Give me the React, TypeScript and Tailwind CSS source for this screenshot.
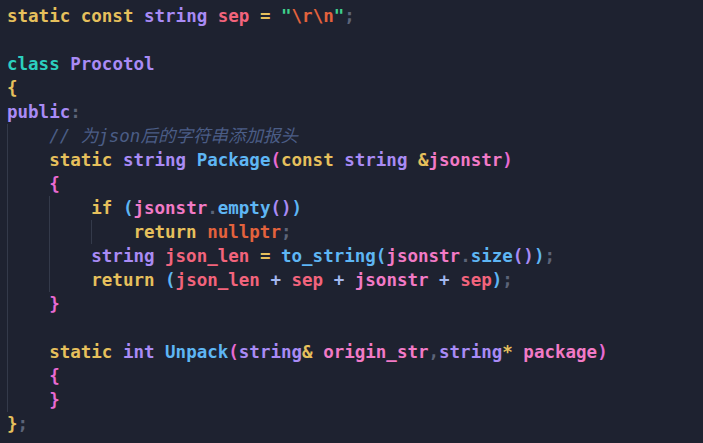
import React from 'react';

// token colours
const kw = 'text-[#e6c05c]';
const ty = 'text-[#a98bf5]';
const cls = 'text-[#2ccfbf]';
const red = 'text-[#f2647c]';
const pink = 'text-[#f27ac6]';
const fn = 'text-[#5eb6f4]';
const pun = 'text-[#5c6478]';
const str = 'text-[#3fd08d]';
const esc = 'text-[#e3623d]';
const op = 'text-[#e6c05c]';
const plus = 'text-[#a3b8ef]';
const cmt = 'text-[#4b5d86] italic font-normal';
const b1 = 'text-[#e6c05c]';
const b2 = 'text-[#e86ad2]';
const b3 = 'text-[#5eb6f4]';
const b4 = 'text-[#a98bf5]';

type Tok = [string, string];
type Line = { indent: number; guides: number; toks: Tok[] };

const lines: Line[] = [
  {
    indent: 0,
    guides: 0,
    toks: [
      ['static', kw], [' ', ''], ['const', kw], [' ', ''], ['string', ty], [' ', ''],
      ['sep', red], [' ', ''], ['=', op], [' ', ''], ['"', str], ['\\r\\n', esc], ['"', str], [';', pun],
    ],
  },
  { indent: 0, guides: 0, toks: [] },
  { indent: 0, guides: 0, toks: [['class', cls], [' ', ''], ['Procotol', ty]] },
  { indent: 0, guides: 0, toks: [['{', b1]] },
  { indent: 0, guides: 0, toks: [['public', ty], [':', pun]] },
  { indent: 1, guides: 1, toks: [['// 为json后的字符串添加报头', cmt]] },
  {
    indent: 1,
    guides: 1,
    toks: [
      ['static', kw], [' ', ''], ['string', ty], [' ', ''], ['Package', fn], ['(', b2],
      ['const', kw], [' ', ''], ['string', ty], [' ', ''], ['&', op], ['jsonstr', pink], [')', b2],
    ],
  },
  { indent: 1, guides: 1, toks: [['{', b2]] },
  {
    indent: 2,
    guides: 2,
    toks: [
      ['if', kw], [' ', ''], ['(', b3], ['jsonstr', pink], ['.', pun], ['empty', fn], ['()', b4], [')', b3],
    ],
  },
  { indent: 3, guides: 3, toks: [['return', kw], [' ', ''], ['nullptr', esc], [';', pun]] },
  {
    indent: 2,
    guides: 2,
    toks: [
      ['string', ty], [' ', ''], ['json_len', red], [' ', ''], ['=', op], [' ', ''], ['to_string', fn],
      ['(', b3], ['jsonstr', pink], ['.', pun], ['size', fn], ['()', b4], [')', b3], [';', pun],
    ],
  },
  {
    indent: 2,
    guides: 2,
    toks: [
      ['return', kw], [' ', ''], ['(', b3], ['json_len', red], [' ', ''], ['+', plus], [' ', ''], ['sep', red],
      [' ', ''], ['+', plus], [' ', ''], ['jsonstr', pink], [' ', ''], ['+', plus], [' ', ''], ['sep', red],
      [')', b3], [';', pun],
    ],
  },
  { indent: 1, guides: 1, toks: [['}', b2]] },
  { indent: 0, guides: 1, toks: [] },
  {
    indent: 1,
    guides: 1,
    toks: [
      ['static', kw], [' ', ''], ['int', ty], [' ', ''], ['Unpack', fn], ['(', b2], ['string', ty], ['&', op],
      [' ', ''], ['origin_str', pink], [',', pun], ['string', ty], ['*', op], [' ', ''], ['package', pink], [')', b2],
    ],
  },
  { indent: 1, guides: 1, toks: [['{', b2]] },
  { indent: 1, guides: 1, toks: [['}', b2]] },
  { indent: 0, guides: 0, toks: [['}', b1], [';', pun]] },
];

const CodeLine = ({ line }: { line: Line }) => {
  const cells = Array.from({ length: Math.max(line.indent, line.guides) });
  return (
    <div className="flex h-[24px] items-center whitespace-pre">
      {cells.map((_, i) => (
        <span
          key={i}
          className={`h-full w-[4ch] shrink-0 ${i < line.guides ? 'border-l border-[#343a4a]' : ''}`}
        />
      ))}
      {line.toks.map(([t, c], i) => (
        <span key={i} className={c}>
          {t}
        </span>
      ))}
    </div>
  );
};

export default function App() {
  return (
    <div
      className="h-[443px] w-[703px] overflow-hidden bg-[#1e2230] pl-[7px] pt-[4px] text-[17.5px] font-bold leading-[24px] text-[#c8ccd8]"
      style={{ fontFamily: '"DejaVu Sans Mono", "Noto Sans CJK SC", monospace' }}
    >
      {lines.map((l, i) => (
        <CodeLine key={i} line={l} />
      ))}
    </div>
  );
}
